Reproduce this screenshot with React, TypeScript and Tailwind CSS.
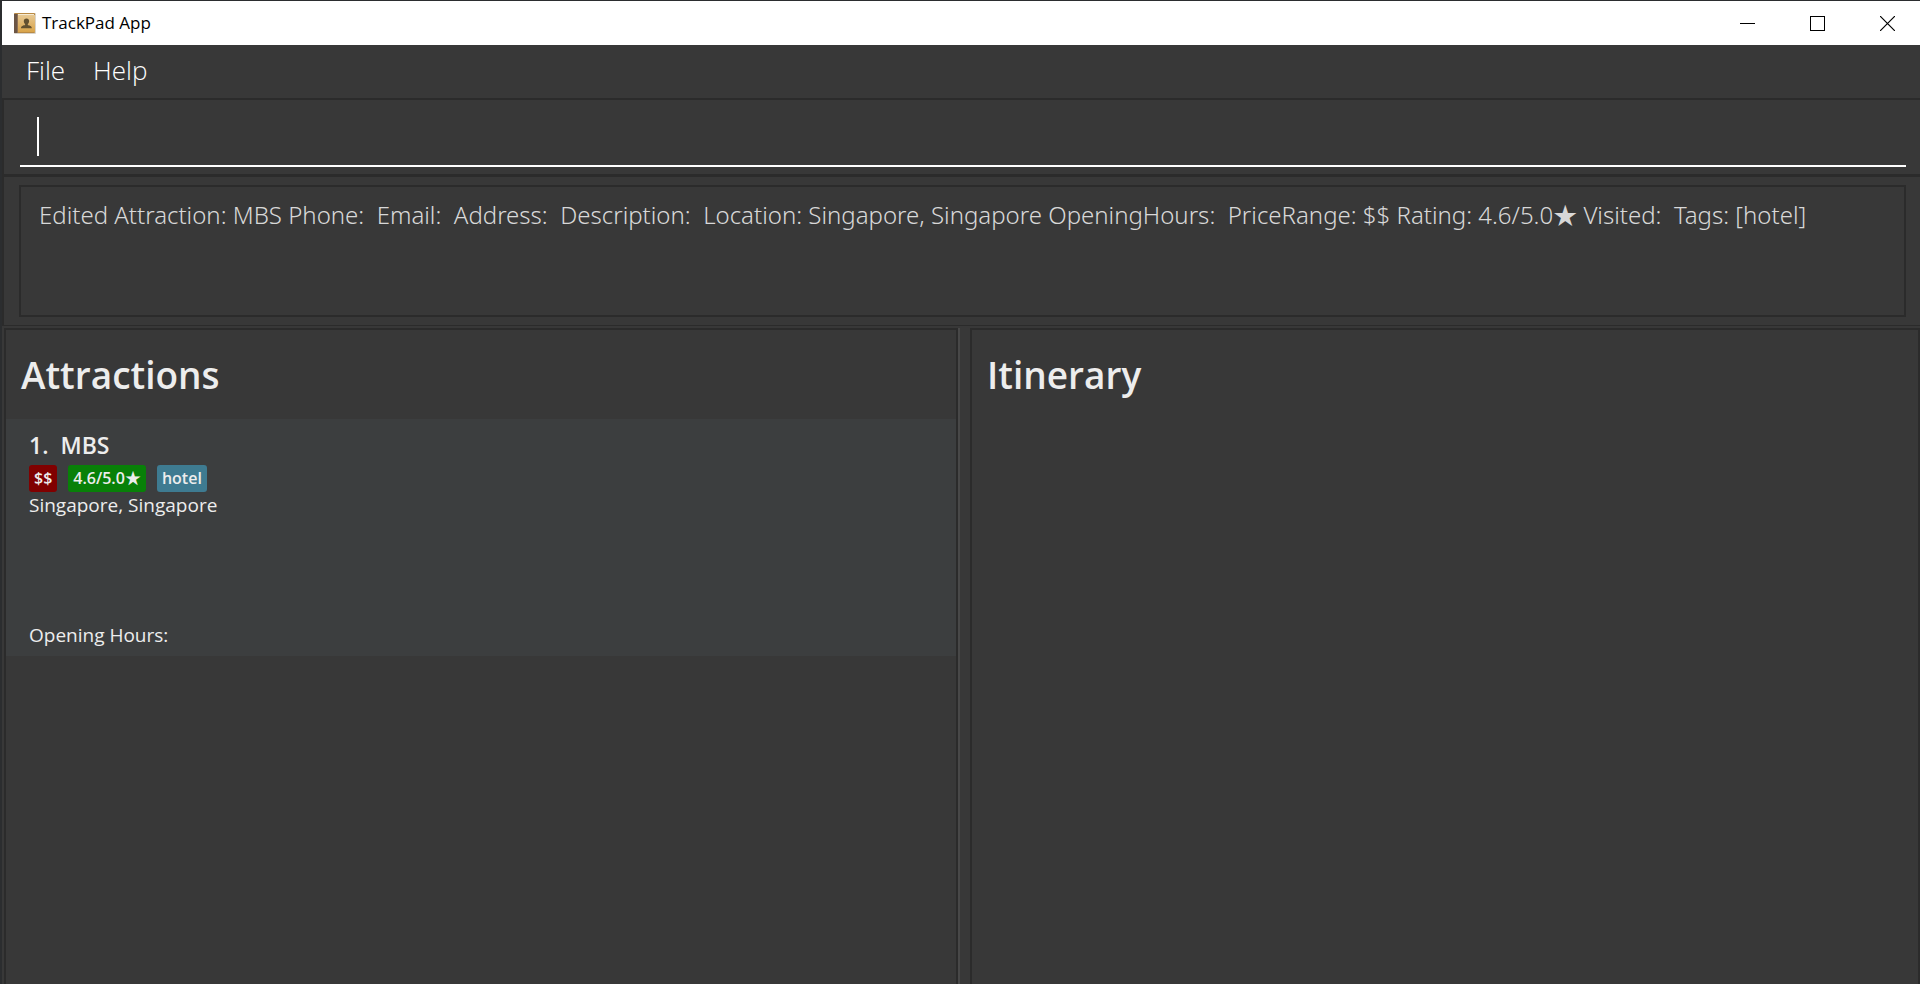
import React from "react";

const tags = [
  { text: "$$", color: "bg-[#800000]" },
  { text: "4.6/5.0★", color: "bg-[#088008]" },
  { text: "hotel", color: "bg-[#3e7b91]" },
];

const resultMessage =
  "Edited Attraction: MBS Phone:  Email:  Address:  Description:  Location: Singapore, Singapore OpeningHours:  PriceRange: $$ Rating: 4.6/5.0★ Visited:  Tags: [hotel]";

function AppIcon() {
  return (
    <svg width="22" height="21" viewBox="0 0 22 21" aria-hidden="true">
      <defs>
        <linearGradient id="cover" x1="0" y1="0" x2="0" y2="1">
          <stop offset="0" stopColor="#e6c893" />
          <stop offset="1" stopColor="#d9a44a" />
        </linearGradient>
      </defs>
      <rect x="0" y="0" width="22" height="21" rx="1" fill="#d8d4cc" />
      <rect x="0" y="0" width="21" height="20" rx="1" fill="#b98a45" />
      <rect x="4" y="2" width="17" height="17" fill="url(#cover)" />
      <rect x="4" y="1" width="16" height="1" fill="#f5ead2" />
      <rect x="0" y="1" width="4" height="19" fill="#6b5545" />
      <rect x="3" y="1" width="1" height="19" fill="#8f7154" />
      <path
        d="M12.500 5.500c1.700 0 2.600 1.100 2.600 2.700 0 1.100-.5 2.200-1.300 2.900v1c1.600.500 4 .9 4 3.100H7c0-2.200 2.500-2.600 4.100-3.100v-1c-.8-.7-1.300-1.800-1.300-2.900 0-1.600 1-2.700 2.700-2.700z"
        fill="#62502f"
      />
    </svg>
  );
}

function TitleBar() {
  const control = "flex h-11 w-[70px] items-center justify-center";
  return (
    <header className="-mr-0.5 flex h-11 items-center bg-white pl-3 text-black">
      <AppIcon />
      <h1 className="flex-1 pl-1.5 text-[17px] leading-6">TrackPad App</h1>
      <button type="button" aria-label="Minimize" className={control}>
        <svg width="15" height="15" viewBox="0 0 15 15">
          <path d="M0 7.500h15" stroke="#000" />
        </svg>
      </button>
      <button type="button" aria-label="Maximize" className={control}>
        <svg width="15" height="15" viewBox="0 0 15 15">
          <rect x="0.500" y="0.500" width="14" height="14" fill="none" stroke="#000" />
        </svg>
      </button>
      <button type="button" aria-label="Close" className={control}>
        <svg width="15" height="15" viewBox="0 0 15 15">
          <path d="M0 0l15 15M15 0L0 15" stroke="#000" strokeWidth="1.200" />
        </svg>
      </button>
    </header>
  );
}

function AttractionCard() {
  return (
    <li className="h-[237px] bg-[#3c3e3f] px-[23px] pt-2 text-[#ededed]">
      <h3 className="flex gap-3 text-[23px] leading-9 font-semibold">
        <span>1.</span>
        <span>MBS</span>
      </h3>
      <ul className="mt-0.5 flex gap-[11px]">
        {tags.map((tag) => (
          <li
            key={tag.text}
            className={`h-[27px] rounded-[3px] px-[5px] text-[16px] leading-[27px] font-semibold ${tag.color}`}
          >
            {tag.text}
          </li>
        ))}
      </ul>
      <p className="text-[19px] leading-[26px]">Singapore, Singapore</p>
      <p className="mt-26 text-[19px] leading-[26px]">Opening Hours:</p>
    </li>
  );
}

export default function App() {
  return (
    <div className="flex h-screen flex-col overflow-hidden border-t border-l-2 border-[#2b2d2f] bg-[#383838] font-['Open_Sans','Noto_Sans_CJK_JP',sans-serif]">
      <TitleBar />
      <nav className="flex h-[53px] items-start gap-7 px-6 text-[26px] font-light text-white">
        <button type="button" className="leading-[50px]">
          File
        </button>
        <button type="button" className="leading-[50px]">
          Help
        </button>
      </nav>

      <div className="border-2 border-r-0 border-b-3 border-[#2b2b2b] px-4 pt-2 pb-[7px]">
        <div className="-mr-0.5 flex h-[59px] items-center border-b-2 border-white pl-[17px]">
          <span className="h-[39px] w-0.5 bg-white" />
          <input
            aria-label="Command"
            className="h-12 flex-1 bg-transparent text-[26px] font-light text-white outline-none"
          />
        </div>
      </div>

      <div className="border-b border-l-2 border-[#2b2b2b] pt-2 pr-3.5 pb-2 pl-[15px]">
        <textarea
          aria-label="Result"
          readOnly
          value={resultMessage}
          className="block h-[132px] w-full resize-none border-2 border-[#2b2b2b] bg-transparent px-[18px] pt-[11px] font-['Noto_Sans','Noto_Sans_CJK_JP',sans-serif] text-[24px] leading-[34px] font-light text-[#d8d8d8] outline-none"
        />
      </div>

      <main className="grid min-h-0 flex-1 grid-cols-[954fr_12px_950fr] pt-0.5 pl-0.5">
        <section className="border-2 border-b-0 border-[#2b2b2b]">
          <h2 className="px-[15px] pt-[18px] pb-[18px] text-[37px] leading-[53px] font-semibold text-[#ededed]">
            Attractions
          </h2>
          <ul>
            <AttractionCard />
          </ul>
        </section>
        <div className="border-l-2 border-[#484848]" />
        <section className="border-2 border-b-0 border-[#2b2b2b]">
          <h2 className="px-[15px] pt-[18px] pb-[18px] text-[37px] leading-[53px] font-semibold text-[#ededed]">
            Itinerary
          </h2>
        </section>
      </main>
    </div>
  );
}
